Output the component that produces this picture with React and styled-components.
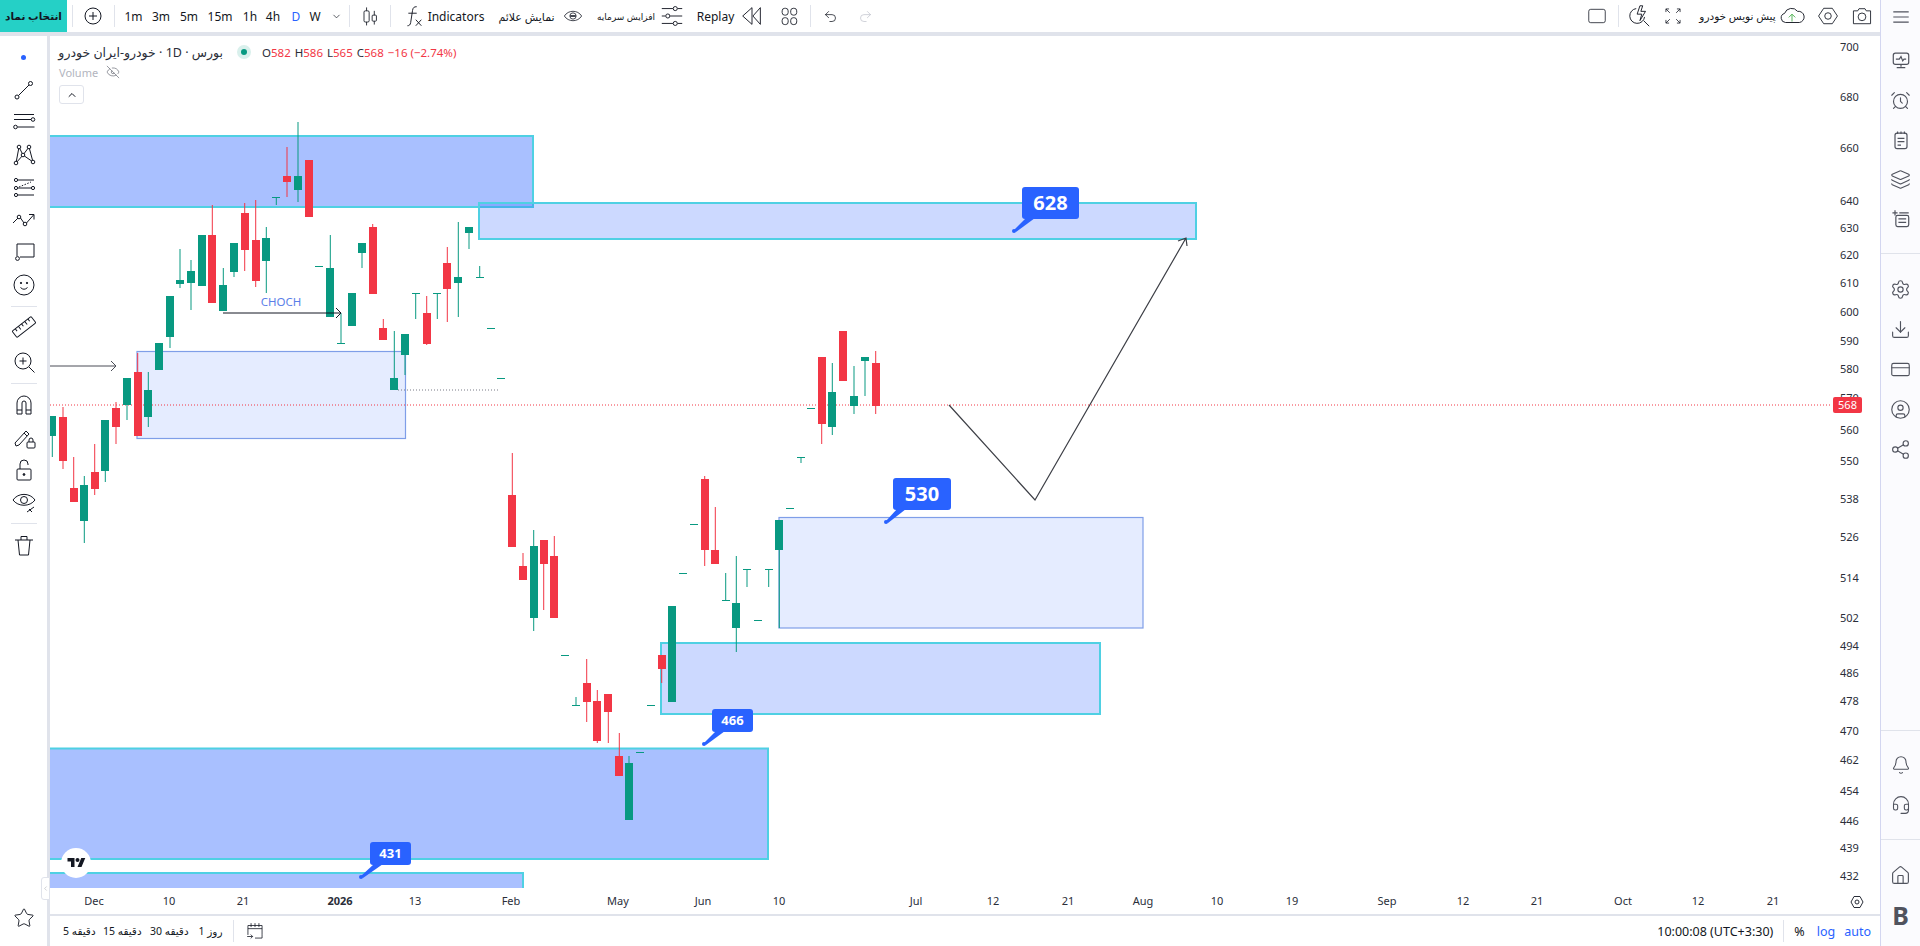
import React from 'react';
import styled, { createGlobalStyle } from 'styled-components';
import { Star, Bell, Headset, House, Layers, AlarmClock, Settings, Download, CreditCard, CircleUser, Share2, Undo2, Redo2, ChevronDown, ChevronUp, ChevronLeft, EyeOff } from 'lucide-react';

const GlobalStyle = createGlobalStyle`
  html, body { margin: 0; padding: 0; background: #fff; overflow: hidden; }
  body { font-family: "Noto Sans", "DejaVu Sans", sans-serif; color: #131722; }
`;

const Page = styled.div`
  display: flex;
  width: 1920px;
  height: 946px;
  overflow: hidden;
`;

const Workspace = styled.div`
  display: flex;
  flex-direction: column;
  flex: 1;
  min-width: 0;
`;

const TopBar = styled.div`
  display: flex;
  align-items: center;
  height: 32px;
  flex: none;
  font-size: 12px;
`;

const TopRule = styled.div`
  height: 4px;
  flex: none;
  background: #e0e3eb;
`;

const SymbolButton = styled.div`
  width: 67px;
  height: 32px;
  flex: none;
  display: flex;
  align-items: center;
  justify-content: center;
  background: #25d0c6;
  font-size: 10.5px;
  font-weight: 700;
  color: #131722;
`;

const Sep = styled.div`
  width: 1px;
  height: 22px;
  flex: none;
  background: #e0e3eb;
  margin-left: ${p => p.$ml || 0}px;
`;

const Btn = styled.div`
  width: ${p => p.$w}px;
  margin-left: ${p => p.$ml || 0}px;
  margin-right: ${p => p.$mr || 0}px;
  flex: none;
  display: flex;
  align-items: center;
  justify-content: center;
  white-space: nowrap;
  font-size: ${p => p.$fs || 12}px;
  color: ${p => p.$color || '#131722'};
`;

const Push = styled.div`
  flex: 1;
`;

const Body = styled.div`
  display: flex;
  flex: 1;
  min-height: 0;
`;

const LeftBar = styled.div`
  width: 50px;
  flex: none;
  display: flex;
  flex-direction: column;
  align-items: center;
  padding: 5px 0 12px;
  box-sizing: border-box;
  border-right: 3px solid #e0e3eb;
  color: #131722;
`;

const ToolSlot = styled.div`
  height: ${p => p.$h || 32.6}px;
  flex: none;
  display: flex;
  align-items: center;
  justify-content: center;
`;

const ToolSep = styled.div`
  width: 26px;
  height: 1px;
  flex: none;
  margin: ${p => p.$mt || 4}px 0 ${p => p.$mb || 0}px;
  background: #e0e3eb;
`;

const ActiveDot = styled.div`
  width: 5px;
  height: 5px;
  border-radius: 50%;
  background: #2962ff;
`;

const Main = styled.div`
  display: flex;
  flex-direction: column;
  flex: 1;
  min-width: 0;
`;

const ChartPane = styled.div`
  position: relative;
  height: 878px;
  flex: none;
`;

const ChartSvg = styled.svg`
  display: block;
  font-family: "Noto Sans", sans-serif;
  font-size: 11px;
  fill: #2a2e39;
`;

const Legend = styled.div`
  position: absolute;
  left: 9px;
  top: 6px;
  display: flex;
  flex-direction: column;
  align-items: flex-start;
`;

const LegendRow = styled.div`
  display: flex;
  align-items: center;
  height: 20px;
  font-size: 12px;
  white-space: nowrap;
`;

const SymbolTitle = styled.span`
  direction: rtl;
  font-size: 12.5px;
  width: 164px;
  color: #2a2e39;
`;

const StatusDot = styled.span`
  width: 6px;
  height: 6px;
  margin: 0 15px 0 18px;
  border-radius: 50%;
  background: #089981;
  box-shadow: 0 0 0 4px #d9f0ec;
`;

const Ohlc = styled.span`
  font-size: 11.5px;
  color: #2a2e39;
  margin-right: 4px;
  & b { font-weight: 400; color: #f23645; }
`;

const VolumeLabel = styled.span`
  font-size: 11px;
  color: #b2b5be;
  margin-right: 8px;
`;

const CollapseLegend = styled.div`
  width: 25px;
  height: 19px;
  margin-top: 3px;
  display: flex;
  align-items: center;
  justify-content: center;
  box-sizing: border-box;
  border: 1px solid #e0e3eb;
  border-radius: 3px;
  background: #fff;
`;

const LogoBadge = styled.div`
  position: absolute;
  left: 11px;
  top: 812px;
  width: 30px;
  height: 30px;
  border-radius: 50%;
  background: #fff;
  display: flex;
  align-items: center;
  justify-content: center;
`;

const Handle = styled.div`
  position: absolute;
  left: -9px;
  top: 841px;
  width: 9px;
  height: 23px;
  display: flex;
  align-items: center;
  justify-content: center;
  background: #fff;
  border: 1px solid #e0e3eb;
  border-radius: 3px 0 0 3px;
  box-sizing: border-box;
  color: #9598a1;
`;

const BottomBar = styled.div`
  height: 32px;
  flex: none;
  display: flex;
  align-items: center;
  box-sizing: border-box;
  border-top: 2px solid #e0e3eb;
  font-size: 12px;
`;

const Range = styled.div`
  width: ${p => p.$w}px;
  margin-left: ${p => p.$ml || 0}px;
  flex: none;
  font-size: 10.5px;
  white-space: nowrap;
  text-align: center;
`;

const Clock = styled.div`
  font-size: 12.5px;
  white-space: nowrap;
`;

const ScaleLink = styled.div`
  margin-left: ${p => p.$ml || 0}px;
  margin-right: ${p => p.$mr || 0}px;
  font-size: 12.5px;
  color: ${p => p.$color || '#2962ff'};
`;

const RightBar = styled.div`
  width: 40px;
  flex: none;
  box-sizing: border-box;
  border-left: 1px solid #d3d6f0;
  background: #fbfbfe;
  display: flex;
  flex-direction: column;
  color: #50535e;
  overflow: hidden;
`;

const SideSlot = styled.div`
  height: ${p => p.$h || 40}px;
  margin-top: ${p => p.$mt || 0}px;
  flex: none;
  display: flex;
  align-items: center;
  justify-content: center;
  font-size: 25px;
  font-weight: 700;
`;

const SideSep = styled.div`
  height: 1px;
  flex: none;
  margin: ${p => p.$mt || 0}px 0 ${p => p.$mb || 0}px;
  background: #e0e3eb;
`;

const Ico = styled.svg.attrs(p => ({
  width: p.$s || 28,
  height: p.$s || 28,
  viewBox: p.$vb || '0 0 28 28',
}))`
  display: block;
  flex: none;
  fill: none;
  stroke: currentColor;
  stroke-width: ${p => p.$sw || 1};
`;

// candles: x, wick top, wick bottom, body top, body bottom, colour
const candles = [
  [52.3, 416, 457, 416, 436, 'g'], [63, 407, 469, 417, 461, 'r'], [73.7, 457, 502, 488, 502, 'r'],
  [84.3, 476, 543, 485, 521, 'g'], [94.7, 444, 495, 472, 489, 'r'], [105.3, 420, 482, 420, 471, 'g'],
  [116, 402, 444, 408, 427, 'r'], [127, 378, 420, 378, 405, 'g'], [137.7, 353, 436, 372, 436, 'r'],
  [148.3, 372, 427, 390, 417, 'g'], [159.3, 343, 370, 343, 370, 'g'], [170, 296, 348, 296, 337, 'g'],
  [180, 249, 288, 280, 284, 'g'], [191, 260, 310, 271, 283, 'g'], [201.7, 235, 286, 235, 286, 'g'],
  [212.3, 205, 303, 235, 303, 'r'], [223.3, 268, 311, 285, 311, 'g'], [234, 243, 277, 243, 272, 'g'],
  [244.7, 203, 271, 213, 250, 'r'], [255.7, 200, 287, 240, 281, 'r'], [266.3, 227, 293, 238, 261, 'g'],
  [276.3, 197, 205, 197, 198, 'g'], [287, 147, 197, 176, 182, 'r'], [298, 122, 202, 176, 190, 'g'],
  [308.7, 160, 217, 160, 217, 'r'], [319.3, 266, 266, 266, 267, 'g'], [330.3, 235, 317, 268, 317, 'g'],
  [341, 313, 343, 343, 344, 'g'], [352, 293, 326, 293, 326, 'g'], [362, 243, 268, 243, 253, 'g'],
  [372.7, 224, 294, 227, 294, 'r'], [383.3, 319, 340, 328, 340, 'r'], [394.3, 331, 390, 378, 390, 'g'],
  [405, 334, 375, 334, 355, 'g'], [415.7, 293, 319, 293, 294, 'g'], [426.7, 296, 345, 313, 344, 'r'],
  [437.3, 293, 319, 293, 294, 'g'], [447.3, 247, 322, 263, 289, 'r'], [458.3, 222, 317, 277, 283, 'g'],
  [469, 227, 249, 227, 233, 'g'], [479.7, 266, 277, 277, 278, 'g'], [490.7, 328, 328, 328, 329, 'g'],
  [501.3, 378, 378, 378, 379, 'g'], [512.3, 453, 547, 495, 547, 'r'], [523, 553, 580, 566, 580, 'r'],
  [533.7, 530, 631, 546, 618, 'g'], [543.7, 540, 610, 540, 564, 'r'], [554.3, 536, 618, 556, 618, 'r'],
  [565.3, 655, 655, 655, 656, 'g'], [576, 697, 705, 705, 706, 'g'], [586.7, 659, 722, 683, 702, 'r'],
  [597.3, 690, 743, 701, 741, 'r'], [608.3, 694, 743, 694, 712, 'r'], [619.3, 733, 776, 756, 776, 'r'],
  [629, 756, 820, 763, 820, 'g'], [640, 752, 752, 752, 753, 'g'], [650.7, 705, 705, 705, 706, 'g'],
  [661.7, 655, 683, 655, 669, 'r'], [672.3, 606, 702, 606, 702, 'g'], [683, 573, 573, 573, 574, 'g'],
  [693.7, 524, 524, 524, 525, 'g'], [704.7, 476, 566, 479, 550, 'r'], [715.3, 507, 564, 550, 564, 'r'],
  [725.7, 573, 600, 600, 601, 'g'], [736.3, 556, 652, 603, 628, 'g'], [747, 569, 587, 569, 570, 'g'],
  [758, 620, 620, 620, 621, 'g'], [768.7, 569, 587, 569, 570, 'g'], [779.3, 520, 628, 520, 550, 'g'],
  [790, 508, 508, 508, 509, 'g'], [801, 457, 463, 457, 458, 'g'], [811, 408, 408, 408, 409, 'g'],
  [821.7, 357, 444, 357, 424, 'r'], [832.3, 363, 435, 392, 427, 'g'], [843.3, 331, 381, 331, 381, 'r'],
  [854, 366, 414, 396, 406, 'g'], [865, 357, 396, 357, 361, 'g'], [875.7, 351, 414, 363, 406, 'r'],
];

const prices = [
  [700, 46], [680, 96], [660, 147], [640, 200], [630, 227], [620, 254], [610, 282], [600, 311],
  [590, 340], [580, 368], [570, 397], [560, 429], [550, 460], [538, 498], [526, 536], [514, 577],
  [502, 617], [494, 645], [486, 672], [478, 700], [470, 730], [462, 759], [454, 790], [446, 820],
  [439, 847], [432, 875],
];

const times = [
  ['Dec', 94], ['10', 169], ['21', 243], ['2026', 340, true], ['13', 415], ['Feb', 511], ['May', 618],
  ['Jun', 703], ['10', 779], ['Jul', 916], ['12', 993], ['21', 1068], ['Aug', 1143], ['10', 1217],
  ['19', 1292], ['Sep', 1387], ['12', 1463], ['21', 1537], ['Oct', 1623], ['12', 1698], ['21', 1773],
];

const CYAN = '#4fd0e3';
const PALE = '#7f9ee8';
const boxes = [
  [40, 136, 493, 71, 0.4, CYAN], [40, 748.5, 728, 110.5, 0.4, CYAN], [40, 873, 483, 30, 0.4, CYAN],
  [661, 643, 439, 71, 0.24, CYAN], [479, 203, 717, 36, 0.24, CYAN],
  [137, 351.5, 268.5, 87, 0.12, PALE], [779, 517.5, 364, 110.5, 0.12, PALE],
];

const tags = [
  { text: '628', x: 1022, y: 187, w: 57, h: 32, tx: 1014, ty: 231, fs: 20 },
  { text: '530', x: 893, y: 478, w: 58, h: 32, tx: 886, ty: 522, fs: 20 },
  { text: '466', x: 712, y: 709, w: 41, h: 23, tx: 704, ty: 744, fs: 13 },
  { text: '431', x: 370, y: 842, w: 41, h: 23, tx: 361, ty: 877, fs: 13 },
];

const Candle = ({ c }) => {
  const [x, wt, wb, bt, bb, kind] = c;
  const color = kind === 'g' ? '#089981' : '#f23645';
  return (
    <g fill={color}>
      {wb > wt && <rect x={x - 0.5} y={wt} width={1} height={wb - wt} />}
      <rect x={Math.round(x - 4)} y={bt} width={8} height={bb - bt} />
    </g>
  );
};

const PriceTag = ({ t }) => (
  <g>
    <path d={`M${t.x + 4} ${t.y + t.h - 1} L${t.tx} ${t.ty - 1} L${t.tx + 2} ${t.ty + 1} L${t.x + 13} ${t.y + t.h - 1} Z`} fill="#2962ff" />
    <circle cx={t.tx} cy={t.ty} r={2} fill="#2962ff" />
    <rect x={t.x} y={t.y} width={t.w} height={t.h} rx={3} fill="#2962ff" />
    <text x={t.x + t.w / 2} y={t.y + t.h / 2 + t.fs * 0.36} textAnchor="middle" fontSize={t.fs} fontWeight={700} fill="#fff">{t.text}</text>
  </g>
);

const Chart = () => (
  <ChartSvg width={1830} height={878} viewBox="50 36 1830 878">
    <defs>
      <clipPath id="plot"><rect x={50} y={36} width={1782} height={852} /></clipPath>
    </defs>
    <g clipPath="url(#plot)">
      {boxes.map(([x, y, w, h, op, stroke], i) => (
        <rect key={i} x={x} y={y} width={w} height={h} fill={`rgba(41,98,255,${op})`} stroke={stroke} strokeWidth={stroke === CYAN ? 2 : 1.2} />
      ))}
      <line x1={50} x2={1835} y1={405} y2={405} stroke="#f23645" strokeDasharray="1 2" />
      <line x1={398} x2={500} y1={390} y2={390} stroke="#787b86" strokeDasharray="1 2" />
      {candles.map((c, i) => <Candle key={i} c={c} />)}
      <g fill="none" stroke="#131722">
        <path d="M223 313H341M336 308l5 5-5 5" />
        <path d="M50 366H116M111 361l5 5-5 5" stroke="#4a4d57" />
        <path d="M949 405L1035 500L1186 238M1178 241l8-3 1 8" stroke="#3d3f46" strokeWidth={1.2} />
      </g>
      {tags.map(t => <PriceTag key={t.text} t={t} />)}
      <text x={281} y={306} textAnchor="middle" fontSize={11.5} fill="#5a7ee8">CHOCH</text>
    </g>
    {prices.map(([p, y]) => <text key={p} x={1840} y={y + 4.5}>{p}</text>)}
    <rect x={1833} y={397} width={29} height={16} rx={2} fill="#f23645" />
    <text x={1847.5} y={409} textAnchor="middle" fill="#fff">568</text>
    {times.map(([t, x, bold], i) => (
      <text key={i} x={x} y={905} textAnchor="middle" fontWeight={bold ? 700 : 400}>{t}</text>
    ))}
    <g fill="none" stroke="#2a2e39">
      <path d="M1851 902l3-5.5h6l3 5.5-3 5.5h-6z" />
      <circle cx={1857} cy={902} r={2} />
    </g>
  </ChartSvg>
);

const leftGroupA = [
  <><path d="M8.5 19.5L19 9" /><circle cx="7" cy="21" r="2" /><circle cx="20.5" cy="7.5" r="2" /></>,
  <><path d="M4 6.5h20M4 11.5h17M7.5 19h17" /><circle cx="23" cy="11.5" r="1.8" /><circle cx="5.5" cy="19" r="1.8" /></>,
  <><path d="M6 22L9 6l4 8 6-8 4 15-10-7z" /><circle cx="6" cy="22" r="1.8" fill="#fff" /><circle cx="9" cy="6" r="1.8" fill="#fff" /><circle cx="13" cy="14" r="1.8" fill="#fff" /><circle cx="19" cy="6" r="1.8" fill="#fff" /><circle cx="23" cy="21" r="1.8" fill="#fff" /></>,
  <><path d="M8 6h16" /><path d="M9 13l12-5" strokeDasharray="1.5 1.5" /><path d="M8 14h13M8 21h16" /><circle cx="6" cy="6" r="1.6" /><circle cx="6" cy="14" r="1.6" /><circle cx="23" cy="14" r="1.6" /><circle cx="6" cy="21" r="1.6" /></>,
  <><path d="M3 17l5-5M10.500 12l3.500 5M16.500 17l7-8M19 8.500h5v5" /><circle cx="9" cy="11" r="1.800" /><circle cx="15" cy="18" r="1.800" /></>,
  <><path d="M7 17V5h17v13H10" /><circle cx="7.500" cy="19.500" r="1.900" /></>,
  <><circle cx="14" cy="14" r="10" /><circle cx="11" cy="12" r=".7" fill="currentColor" /><circle cx="17" cy="12" r=".7" fill="currentColor" /><path d="M10.500 16.500q3.500 3.500 7 0" /></>,
];

const leftGroupB = [
  <><g transform="rotate(-38 14 14)"><rect x="2" y="10" width="24" height="8" rx="1" /><path d="M6 10v3M10 10v4M14 10v3M18 10v4M22 10v3" /></g></>,
  <><circle cx="13" cy="13" r="8" /><path d="M13 9.500v7M9.500 13h7M19 19l5.500 5.500" /></>,
];

const leftGroupC = [
  <path d="M7 23V12a7 7 0 0 1 14 0v11h-5V12a2 2 0 0 0-4 0v11zM7 19h5M16 19h5" />,
  <><path d="M5 19l1 3 3-1 10-11-3-3zM14 9l3 3" /><rect x="17" y="18" width="8" height="6" rx="1" /><path d="M19 18v-2a2 2 0 0 1 4 0v2" /></>,
  <><rect x="7" y="13" width="14" height="11" rx="1" /><path d="M10 13V8a4 4 0 0 1 8 0v1" /><circle cx="14" cy="18.500" r=".9" fill="currentColor" /></>,
  <><path d="M3 11c5-7.500 17-7.500 22 0-5 7-17 7-22 0z" /><circle cx="14" cy="11" r="3.500" /><path d="M17 23l7-5M19 20l3 3" /></>,
];

const Toolbar = () => (
  <TopBar>
    <SymbolButton>انتخاب نماد</SymbolButton>
    <Sep $ml={5} />
    <Btn $w={39}>
      <Ico $s={20} $vb="0 0 20 20"><circle cx="10" cy="10" r="8" /><path d="M10 6v8M6 10h8" /></Ico>
    </Btn>
    <Sep $ml={2} />
    <Btn $w={23} $ml={7}>1m</Btn>
    <Btn $w={32}>3m</Btn>
    <Btn $w={24}>5m</Btn>
    <Btn $w={38}>15m</Btn>
    <Btn $w={22}>1h</Btn>
    <Btn $w={24}>4h</Btn>
    <Btn $w={22} $color="#2962ff">D</Btn>
    <Btn $w={16}>W</Btn>
    <Btn $w={26}><ChevronDown size={11} strokeWidth={1.5} /></Btn>
    <Sep />
    <Btn $w={40}>
      <Ico $s={24}><path d="M10 4v4M10 21v4M19 8v5M19 20v4" /><rect x="7" y="8" width="6" height="13" rx="1.500" /><rect x="16.500" y="13" width="5" height="7" rx="1" /></Ico>
    </Btn>
    <Sep />
    <Btn $w={28} $ml={8}>
      <Ico $s={26}><path d="M18 4c-3 0-4 1-4.500 4L11.500 21c-.4 2.500-1.500 3.500-3.500 3.500M9 11h9M17 18l6 6.500M23 18l-6 6.500" /></Ico>
    </Btn>
    <Btn $w={58}>Indicators</Btn>
    <Btn $w={59} $ml={12} $fs={11}>نمایش علائم</Btn>
    <Btn $w={24} $ml={5}>
      <Ico $s={22}><path d="M3 14c5-8 17-8 22 0-5 8-17 8-22 0z" /><path d="M10.500 14h7" strokeWidth="2" /><circle cx="14" cy="14" r="4" /></Ico>
    </Btn>
    <Btn $w={56} $ml={13} $fs={9}>افزایش سرمایه</Btn>
    <Btn $w={24} $ml={6}>
      <Ico $s={26}><path d="M3 6h12M20 6h5M3 14h4M12 14h13M3 22h12M20 22h5" /><circle cx="17.500" cy="6" r="2.200" /><circle cx="9.500" cy="14" r="2.200" /><circle cx="17.500" cy="22" r="2.200" /></Ico>
    </Btn>
    <Btn $w={37} $ml={13}>Replay</Btn>
    <Btn $w={24} $ml={6}>
      <Ico $s={26}><path d="M14 5L4 14l10 9zM23 5l-8 9 8 9z" /></Ico>
    </Btn>
    <Btn $w={24} $ml={13}>
      <Ico $s={24}><rect x="6" y="5" width="7" height="8" rx="3" /><rect x="16" y="5" width="7" height="8" rx="3" /><rect x="6" y="16" width="7" height="8" rx="3" /><rect x="16" y="16" width="7" height="8" rx="3" /></Ico>
    </Btn>
    <Sep $ml={9} />
    <Btn $w={24} $ml={7}><Undo2 size={15} strokeWidth={1.2} /></Btn>
    <Btn $w={24} $ml={11} $color="#c1c4cd"><Redo2 size={15} strokeWidth={1.2} /></Btn>
    <Push />
    <Btn $w={24}>
      <Ico $s={22}><rect x="3.500" y="5.500" width="21" height="17" rx="2.500" /></Ico>
    </Btn>
    <Sep $ml={9} />
    <Btn $w={24} $ml={8}>
      <Ico $s={26}><path d="M11 6a8 8 0 1 0 9 9M19 19l6 6M15 3l-3 9h5l-2 7 6-10h-5l2-6z" /></Ico>
    </Btn>
    <Btn $w={24} $ml={10}>
      <Ico $s={22}><path d="M5 9V5h4M5 5l5 5M19 5h4v4M23 5l-5 5M5 19v4h4M5 23l5-5M23 19v4h-4M23 23l-5-5" /></Ico>
    </Btn>
    <Btn $w={75} $ml={15} $fs={10.5}>پیش نویس خودرو</Btn>
    <Btn $w={24} $ml={5}>
      <Ico $s={26} $vb="0 0 28 20"><path d="M7 17a5 5 0 0 1-1-9.800A8 8 0 0 1 20 5a6 6 0 0 1 2 12z" /><path d="M14 16V8M10.500 11.500L14 8l3.500 3.500" stroke="#4caf50" /></Ico>
    </Btn>
    <Btn $w={24} $ml={12}>
      <Ico $s={24}><path d="M3 14L9 5h10l6 9-6 9H9z" /><circle cx="14" cy="14" r="3.800" /></Ico>
    </Btn>
    <Btn $w={24} $ml={10} $mr={6}>
      <Ico $s={24}><path d="M4 8h5l1.500-2.500h7L19 8h5v15H4z" /><circle cx="14" cy="15" r="4.500" /></Ico>
    </Btn>
  </TopBar>
);

const App = () => (
  <Page>
    <GlobalStyle />
    <Workspace>
      <Toolbar />
      <TopRule />
      <Body>
        <LeftBar>
          <ToolSlot><ActiveDot /></ToolSlot>
          {leftGroupA.map((g, i) => <ToolSlot key={i}><Ico>{g}</Ico></ToolSlot>)}
          <ToolSep $mb={3} />
          {leftGroupB.map((g, i) => <ToolSlot key={i} $h={35}><Ico>{g}</Ico></ToolSlot>)}
          <ToolSep $mt={3} $mb={5} />
          {leftGroupC.map((g, i) => <ToolSlot key={i}><Ico>{g}</Ico></ToolSlot>)}
          <ToolSep $mb={5} />
          <ToolSlot>
            <Ico><path d="M8 9l1.500 15h9L20 9M5 9h18M11 9V5.500h6V9" /></Ico>
          </ToolSlot>
          <Push />
          <ToolSlot><Star size={22} strokeWidth={1} /></ToolSlot>
        </LeftBar>
        <Main>
          <ChartPane>
            <Chart />
            <Legend>
              <LegendRow>
                <SymbolTitle>بورس · 1D · خودرو-ایران خودرو</SymbolTitle>
                <StatusDot />
                <Ohlc>O<b>582</b></Ohlc>
                <Ohlc>H<b>586</b></Ohlc>
                <Ohlc>L<b>565</b></Ohlc>
                <Ohlc>C<b>568</b></Ohlc>
                <Ohlc><b>−16 (−2.74%)</b></Ohlc>
              </LegendRow>
              <LegendRow>
                <VolumeLabel>Volume</VolumeLabel>
                <EyeOff size={14} strokeWidth={1} color="#50535e" />
              </LegendRow>
              <CollapseLegend><ChevronUp size={12} strokeWidth={2} /></CollapseLegend>
            </Legend>
            <LogoBadge>
              <svg width="21" height="14" viewBox="0 0 36 28" fill="#131722">
                <path d="M14 22H7V11H0V4h14v18zM28 22h-8l7.500-18h8L28 22z" />
                <circle cx="20" cy="8" r="4" />
              </svg>
            </LogoBadge>
            <Handle><ChevronLeft size={9} strokeWidth={1.5} /></Handle>
          </ChartPane>
          <BottomBar>
            <Range $w={29} $ml={13}>5 دقیقه</Range>
            <Range $w={36} $ml={11}>15 دقیقه</Range>
            <Range $w={35} $ml={11}>30 دقیقه</Range>
            <Range $w={29} $ml={11}>1 روز</Range>
            <Sep $ml={8} />
            <Btn $w={24} $ml={9}>
              <Ico $s={22}><path d="M23 18V7H5v12M5 11h18M9 4v5M14 4v5M19 4v5M23 18v5H14M4 21h7M8.500 18.500L11 21l-2.500 2.500" /></Ico>
            </Btn>
            <Push />
            <Clock>10:00:08 (UTC+3:30)</Clock>
            <Sep $ml={10} />
            <ScaleLink $ml={10} $color="#131722">%</ScaleLink>
            <ScaleLink $ml={12}>log</ScaleLink>
            <ScaleLink $ml={9} $mr={9}>auto</ScaleLink>
          </BottomBar>
        </Main>
      </Body>
    </Workspace>
    <RightBar>
      <SideSlot $h={34}>
        <Ico $s={24}><path d="M5 8h18M5 14h18M5 20h18" strokeWidth="1.300" /></Ico>
      </SideSlot>
      <SideSlot $mt={6}>
        <Ico $s={24} $sw={1.400}><rect x="5" y="6" width="18" height="13" rx="2.500" /><path d="M8 13h4l2-3 2 5 1.500-2H20M14 19v3M9 23h10" /></Ico>
      </SideSlot>
      <SideSlot><AlarmClock size={21} strokeWidth={1.300} /></SideSlot>
      <SideSlot>
        <Ico $s={24} $sw={1.400}><rect x="7" y="6" width="14" height="18" rx="2.500" /><path d="M10 4v3M14 4v3M18 4v3M10 12h8M10 16h8M10 20h4" /></Ico>
      </SideSlot>
      <SideSlot $h={38}><Layers size={21} strokeWidth={1.300} /></SideSlot>
      <SideSlot>
        <Ico $s={24} $sw={1.400}><path d="M4 8h6M7 5v6" /><rect x="8" y="11" width="15" height="13" rx="2" /><path d="M11 15h9M11 19h9M12 8h11" /></Ico>
      </SideSlot>
      <SideSep $mt={15} $mb={15} />
      <SideSlot><Settings size={21} strokeWidth={1.300} /></SideSlot>
      <SideSlot><Download size={21} strokeWidth={1.300} /></SideSlot>
      <SideSlot><CreditCard size={21} strokeWidth={1.300} /></SideSlot>
      <SideSlot><CircleUser size={21} strokeWidth={1.300} /></SideSlot>
      <SideSlot><Share2 size={21} strokeWidth={1.300} /></SideSlot>
      <SideSep $mt={261} $mb={14} />
      <SideSlot><Bell size={20} strokeWidth={1.300} /></SideSlot>
      <SideSlot><Headset size={20} strokeWidth={1.300} /></SideSlot>
      <SideSep $mt={14} $mb={15} />
      <SideSlot><House size={21} strokeWidth={1.300} /></SideSlot>
      <SideSlot>B</SideSlot>
    </RightBar>
  </Page>
);

export default App;
